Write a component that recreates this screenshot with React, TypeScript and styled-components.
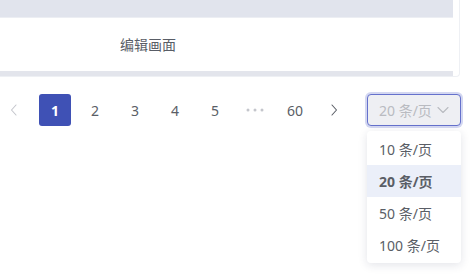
import React from "react";
import styled, { createGlobalStyle } from "styled-components";

const GlobalStyle = createGlobalStyle`
  html, body {
    margin: 0;
    padding: 0;
    background: #ffffff;
    font-family: "Noto Sans", "Noto Sans CJK SC", sans-serif;
  }
`;

const Page = styled.div`
  width: 472px;
  height: 276px;
  position: relative;
  overflow: hidden;
`;

const TableCard = styled.div`
  width: 460px;
  height: 77px;
  box-sizing: border-box;
  border-right: 1px solid #eef0f4;
  border-bottom: 1px solid #eef0f4;
  border-bottom-right-radius: 4px;
  display: flex;
  flex-direction: column;
`;

const HeadRow = styled.div`
  width: 453px;
  height: 17px;
  background: #e1e4ed;
`;

const BodyRow = styled.div`
  width: 453px;
  height: 55px;
  display: grid;
  grid-template-columns: 104px 1fr;
  align-items: center;
  border-top: 1px solid #eceef3;
  box-sizing: border-box;
`;

const Cell = styled.div`
  grid-column: 2;
  padding-left: 16px;
  font-size: 14px;
  color: #595d66;
`;

const ScrollTrack = styled.div`
  width: 453px;
  height: 5px;
  background: #e3e5ec;
`;

const Pager = styled.div`
  display: flex;
  align-items: center;
  height: 32px;
  margin-top: 17px;
  margin-left: -1px;
`;

const PageItem = styled.button<{ $active?: boolean; $muted?: boolean }>`
  width: 32px;
  height: 32px;
  margin-right: 8px;
  border: none;
  border-radius: 3px;
  padding: 0;
  font-family: inherit;
  font-size: 14px;
  font-weight: ${(p) => (p.$active ? 700 : 400)};
  color: ${(p) => (p.$active ? "#ffffff" : p.$muted ? "#c4c6cc" : "#5a5e66")};
  background: ${(p) => (p.$active ? "#3f51b5" : "transparent")};
  display: flex;
  align-items: center;
  justify-content: center;
  cursor: pointer;
`;

const Select = styled.div`
  margin-left: auto;
  margin-right: 11px;
  width: 94px;
  height: 32px;
  box-sizing: border-box;
  border: 1px solid #6571cc;
  box-shadow: 0 0 0 2px #d3d7f1;
  border-radius: 4px;
  background: #eeeff3;
  display: flex;
  align-items: center;
  padding: 0 10px 0 11px;
  font-size: 14px;
  color: #b9bbc1;
`;

const SelectText = styled.span`
  flex: 1;
`;

const Menu = styled.div`
  position: absolute;
  left: 367px;
  top: 131px;
  width: 94px;
  padding: 2px 0;
  background: #ffffff;
  border-radius: 4px;
  box-shadow: 0 2px 10px rgba(30, 40, 80, 0.13);
`;

const Option = styled.div<{ $selected?: boolean }>`
  height: 32px;
  display: flex;
  align-items: center;
  padding-left: 12px;
  font-size: 14px;
  color: #5a5e66;
  font-weight: ${(p) => (p.$selected ? 700 : 400)};
  background: ${(p) => (p.$selected ? "#ebeff9" : "transparent")};
`;

const Chevron = ({ dir, color }: { dir: "left" | "right" | "down"; color: string }) => {
  const d =
    dir === "left" ? "M8 2 L3.5 7 L8 12" : dir === "right" ? "M4 2 L8.5 7 L4 12" : "M2 4.5 L7 9.5 L12 4.5";
  return (
    <svg width="14" height="14" viewBox="0 0 14 14" fill="none">
      <path d={d} stroke={color} strokeWidth="1.1" strokeLinecap="round" strokeLinejoin="round" />
    </svg>
  );
};

const Dots = () => (
  <svg width="20" height="4" viewBox="0 0 20 4">
    <circle cx="3" cy="2" r="1.5" fill="#c4c6cc" />
    <circle cx="10" cy="2" r="1.5" fill="#c4c6cc" />
    <circle cx="17" cy="2" r="1.5" fill="#c4c6cc" />
  </svg>
);

const pages = ["2", "3", "4", "5"];
const sizes = [10, 20, 50, 100];

export default function App() {
  return (
    <Page>
      <GlobalStyle />
      <TableCard>
        <HeadRow />
        <BodyRow>
          <Cell>编辑画面</Cell>
        </BodyRow>
        <ScrollTrack />
      </TableCard>
      <Pager>
        <PageItem $muted>
          <Chevron dir="left" color="#c4c6cc" />
        </PageItem>
        <PageItem $active>1</PageItem>
        {pages.map((p) => (
          <PageItem key={p}>{p}</PageItem>
        ))}
        <PageItem $muted>
          <Dots />
        </PageItem>
        <PageItem>60</PageItem>
        <PageItem>
          <Chevron dir="right" color="#5a5e66" />
        </PageItem>
        <Select>
          <SelectText>20 条/页</SelectText>
          <Chevron dir="down" color="#b9bbc1" />
        </Select>
      </Pager>
      <Menu>
        {sizes.map((s) => (
          <Option key={s} $selected={s === 20}>
            {s} 条/页
          </Option>
        ))}
      </Menu>
    </Page>
  );
}
